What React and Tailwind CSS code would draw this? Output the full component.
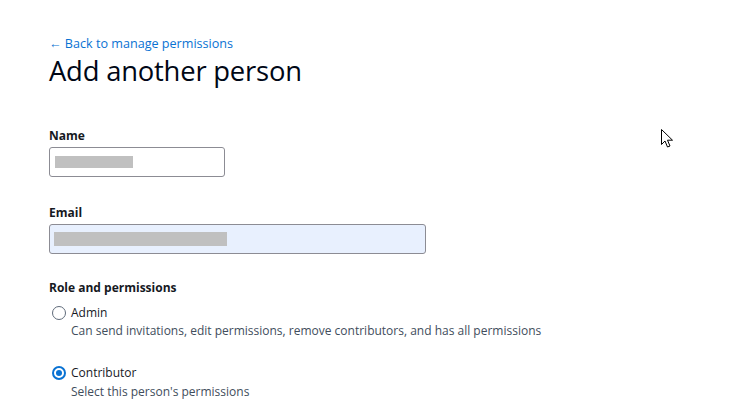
import React from "react";

function Radio({ checked }) {
  return checked ? (
    <span className="mt-[1px] flex h-[14px] w-[14px] shrink-0 items-center justify-center rounded-full border-2 border-[#0972d3] bg-white">
      <span className="h-[6px] w-[6px] rounded-full bg-[#0972d3]" />
    </span>
  ) : (
    <span className="mt-[1px] h-[14px] w-[14px] shrink-0 rounded-full border border-[#5f6b7a] bg-white" />
  );
}

export default function App() {
  return (
    <div
      className="relative h-[416px] w-[756px] overflow-hidden bg-white text-[#16191f]"
      style={{ fontFamily: '"Open Sans", "Noto Sans", sans-serif' }}
    >
      <div className="flex flex-col pl-[49px] pt-[36px]">
        <a className="text-[12.6px] leading-[16px] text-[#0972d3]">← Back to manage permissions</a>
        <h1 className="mt-[2px] text-[27.4px] leading-[34px] tracking-[-0.2px] text-[#000716]">Add another person</h1>

        <div className="mt-[40px] text-[12px] font-bold leading-[16px]">Name</div>
        <div className="mt-[3px] flex h-[30px] w-[176px] items-center rounded-[3px] border border-[#8c8c94] px-[5px]">
          <span className="h-[12px] w-[78px] bg-[#c0c0c0]" />
        </div>

        <div className="mt-[28px] text-[12px] font-bold leading-[16px]">Email</div>
        <div className="mt-[3px] flex h-[30px] w-[377px] items-center rounded-[3px] border border-[#8c8c94] bg-[#e8f0fe] px-[4px]">
          <span className="h-[14px] w-[173px] bg-[#c0c0c0]" />
        </div>

        <div className="mt-[26px] text-[12px] font-bold leading-[16px]">Role and permissions</div>
        <div className="mt-[9px] flex gap-[5px] pl-[3px]">
          <Radio />
          <div className="flex flex-col">
            <span className="text-[12px] leading-[16px]">Admin</span>
            <span className="mt-[2px] text-[12px] leading-[16px] text-[#414d5c]">
              Can send invitations, edit permissions, remove contributors, and has all permissions
            </span>
          </div>
        </div>
        <div className="mt-[26px] flex gap-[5px] pl-[3px]">
          <Radio checked />
          <div className="flex flex-col">
            <span className="text-[12px] leading-[16px]">Contributor</span>
            <span className="mt-[3px] text-[12px] leading-[16px] text-[#414d5c]">Select this person's permissions</span>
          </div>
        </div>
      </div>

      <svg className="absolute left-[661px] top-[129px]" width="13" height="20" viewBox="0 0 13 20">
        <path d="M0.5 0.5 L0.5 15.5 L4 12 L6.5 18 L9 17 L6.5 11.2 L11.5 11.2 Z" fill="white" stroke="black" strokeWidth="1" strokeLinejoin="miter" />
      </svg>
    </div>
  );
}
